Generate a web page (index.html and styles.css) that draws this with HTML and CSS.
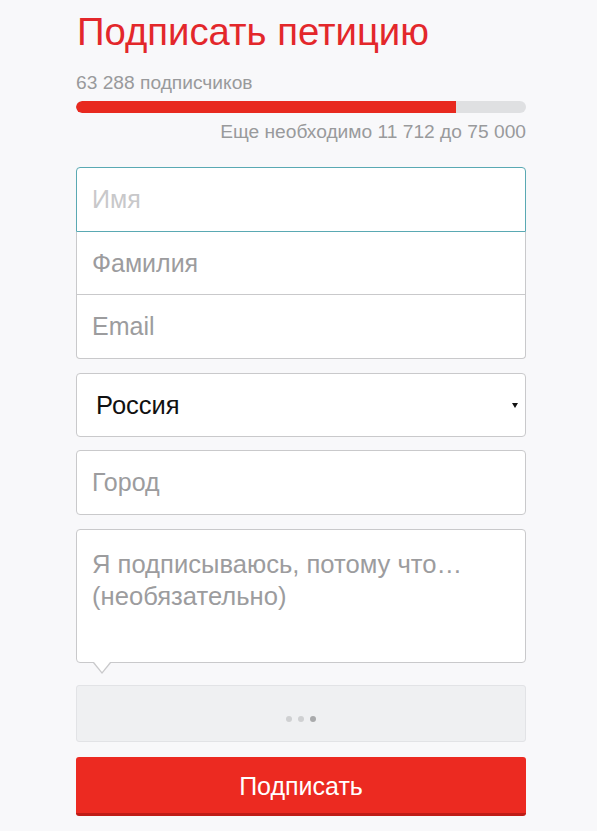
FILE: index.html
```html
<!DOCTYPE html>
<html lang="ru">
<head>
<meta charset="utf-8">
<title>Подписать петицию</title>
<link rel="stylesheet" href="styles.css">
</head>
<body>
<div class="page">
  <h1 class="title">Подписать петицию</h1>
  <div class="count">63 288 подписчиков</div>
  <div class="bar"><div class="bar-fill" style="width: 84.4%"></div></div>
  <div class="remaining">Еще необходимо 11 712 до 75 000</div>

  <div class="group">
    <input class="field field-first" type="text" placeholder="Имя">
    <input class="field field-mid" type="text" placeholder="Фамилия">
    <input class="field field-last" type="email" placeholder="Email">
  </div>

  <div class="select-wrap">
    <select class="select">
      <option>Россия</option>
    </select>
    <span class="caret"></span>
  </div>

  <input class="single" type="text" placeholder="Город">

  <div class="note">
    <textarea class="textarea" placeholder="Я подписываюсь, потому что… (необязательно)"></textarea>
  </div>

  <div class="captcha">
    <span class="dot dot-light"></span>
    <span class="dot dot-light"></span>
    <span class="dot dot-dark"></span>
  </div>

  <button class="submit" type="button">Подписать</button>
</div>
</body>
</html>
```

FILE: styles.css
```css
html, body {
  margin: 0;
  padding: 0;
  background: #f8f8fa;
}

body {
  font-family: "Liberation Sans", Arial, sans-serif;
}

.page {
  width: 450px;
  margin-left: 76px;
  padding-top: 10px;
  display: flex;
  flex-direction: column;
}

.title {
  margin: 0;
  font-size: 38.3px;
  line-height: 44px;
  font-weight: normal;
  color: #e3272b;
  padding-left: 1px;
}

.count {
  margin-top: 19px;
  font-size: 19.2px;
  line-height: 20px;
  color: #999a9c;
}

.bar {
  margin-top: 8px;
  height: 12px;
  border-radius: 6px;
  background: #dfe0e2;
  overflow: hidden;
}

.bar-fill {
  height: 100%;
  background: #e8291f;
  border-radius: 6px 0 0 6px;
}

.remaining {
  margin-top: 9px;
  font-size: 19.2px;
  line-height: 20px;
  color: #999a9c;
  text-align: right;
}

.group {
  margin-top: 25px;
  display: flex;
  flex-direction: column;
}

.field {
  box-sizing: border-box;
  margin: 0;
  padding: 0 15px;
  border: 0;
  border-left: 1px solid #c9c9cb;
  border-right: 1px solid #c9c9cb;
  border-bottom: 1px solid #c9c9cb;
  font-family: "Liberation Sans", Arial, sans-serif;
  font-size: 25px;
  color: #333;
  background: #fff;
  outline: none;
}

.field-first {
  height: 65px;
  border: 1px solid #5aa9b3;
  border-radius: 4px 4px 0 0;
}

.field-first::placeholder {
  color: #c8c8ca;
}

.field-mid {
  height: 63px;
}

.field-last {
  height: 64px;
  border-radius: 0 0 4px 4px;
}

.field-mid::placeholder,
.field-last::placeholder,
.single::placeholder,
.textarea::placeholder {
  color: #9c9c9e;
  opacity: 1;
}

.select-wrap {
  margin-top: 14px;
  position: relative;
}

.select {
  box-sizing: border-box;
  width: 100%;
  height: 64px;
  margin: 0;
  padding: 0 16px 0 19px;
  border: 1px solid #c9c9cb;
  border-radius: 4px;
  background: #fff;
  font-family: "Liberation Sans", Arial, sans-serif;
  font-size: 25.5px;
  color: #111;
  -webkit-appearance: none;
  appearance: none;
  outline: none;
}

.caret {
  position: absolute;
  right: 8px;
  top: 30px;
  width: 0;
  height: 0;
  border-left: 3px solid transparent;
  border-right: 3px solid transparent;
  border-top: 5px solid #111;
}

.single {
  box-sizing: border-box;
  margin-top: 13px;
  height: 65px;
  padding: 0 15px;
  border: 1px solid #c9c9cb;
  border-radius: 4px;
  background: #fff;
  font-family: "Liberation Sans", Arial, sans-serif;
  font-size: 25px;
  color: #333;
  outline: none;
}

.note {
  margin-top: 14px;
  position: relative;
}

.note::before,
.note::after {
  content: "";
  position: absolute;
  width: 0;
  height: 0;
  border-left: 9px solid transparent;
  border-right: 9px solid transparent;
}

.note::before {
  left: 17px;
  top: 134px;
  border-top: 11px solid #c9c9cb;
}

.note::after {
  left: 18px;
  top: 133px;
  border-left-width: 8px;
  border-right-width: 8px;
  border-top: 10px solid #fff;
}

.textarea {
  display: block;
  box-sizing: border-box;
  width: 100%;
  height: 134px;
  margin: 0;
  padding: 18px 15px 0;
  border: 1px solid #c9c9cb;
  border-radius: 4px;
  background: #fff;
  font-family: "Liberation Sans", Arial, sans-serif;
  font-size: 25.6px;
  line-height: 32px;
  color: #333;
  resize: none;
  outline: none;
}

.captcha {
  box-sizing: border-box;
  margin-top: 22px;
  height: 57px;
  border: 1px solid #e2e3e6;
  border-radius: 3px;
  background: #eff0f2;
  display: flex;
  justify-content: center;
  align-items: flex-end;
  gap: 6px;
  padding-bottom: 19px;
}

.dot {
  width: 6px;
  height: 6px;
  border-radius: 50%;
}

.dot-light {
  background: #cfd0d2;
}

.dot-dark {
  background: #a9aaac;
}

.submit {
  margin-top: 15px;
  height: 59px;
  padding: 3px 0 0;
  border: 0;
  border-bottom: 3px solid #bf1c16;
  border-radius: 3px;
  background: #ec2a21;
  color: #fff;
  font-family: "Liberation Sans", Arial, sans-serif;
  font-size: 25px;
  cursor: pointer;
}
```
